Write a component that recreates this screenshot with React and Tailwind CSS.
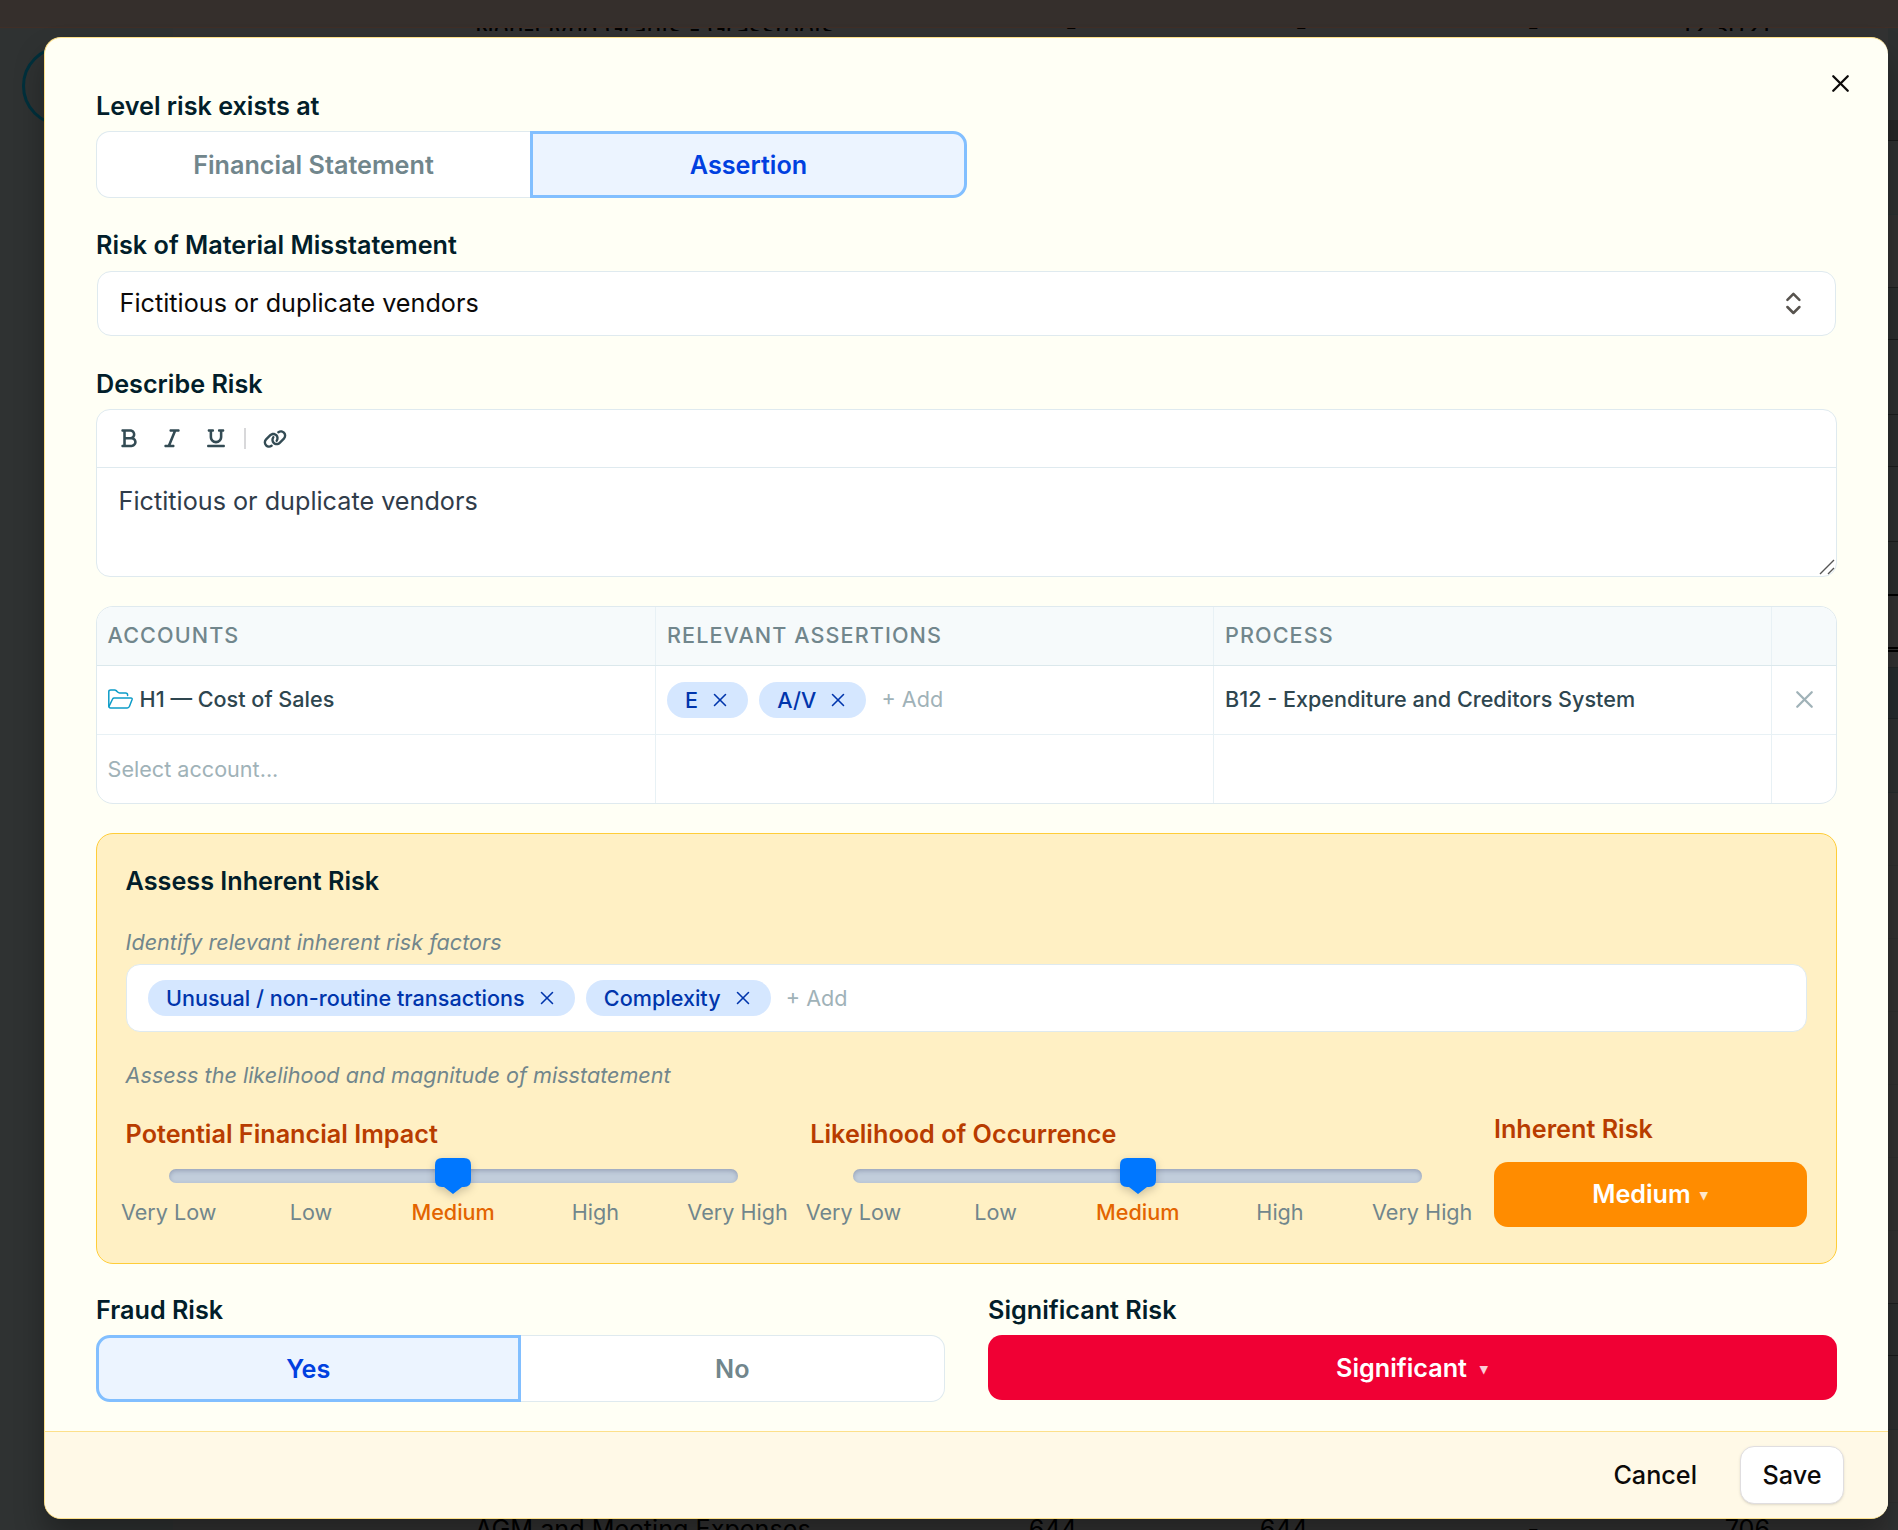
import React from "react";
import { X, ChevronsUpDown } from "lucide-react";
import { FaBold, FaItalic, FaUnderline, FaLink } from "react-icons/fa6";

const levels = ["Very Low", "Low", "Medium", "High", "Very High"];

// rows of the trial balance behind the dialog, only their right edge is visible
const edgeRows = [
  { h: 92, cls: "bg-[#2d3030]" },
  { h: 21, cls: "bg-[#272828] border-b border-[#181a1a]" },
  { h: 74, cls: "bg-[#2e3131] border-b border-[#293132]" },
  { h: 73, cls: "bg-[#323232] border-b border-[#1e2020]" },
  { h: 52, cls: "bg-[#2c2f2f] border-b border-[#1a1c1c]" },
  { h: 75, cls: "bg-[#2d3030] border-b border-[#1c1e1e]" },
  { h: 52, cls: "bg-[#2c2f2f] border-b border-[#1c1e1e]" },
  { h: 75, cls: "bg-[#2d3030] border-b border-[#1c1e1e]" },
  { h: 54, cls: "bg-[#2c2f2f] border-b-2 border-[#000]" },
  { h: 56, cls: "bg-[#323232] border-b-[5px] border-double border-[#000]" },
  { h: 16, cls: "bg-[#323232] border-b border-[#222728]" },
  { h: 51, cls: "bg-[#262c2e] border-b border-[#1e2425]" },
  { h: 74, cls: "bg-[#2d3030] border-b border-[#262c2d]" },
  { h: 73, cls: "bg-[#323232] border-b border-[#2e2f2f]" },
  { h: 73, cls: "bg-[#323232] border-b border-[#2e2f2f]" },
  { h: 73, cls: "bg-[#323232] border-b border-[#2e2f2f]" },
  { h: 73, cls: "bg-[#323232] border-b border-[#2e2f2f]" },
  { h: 73, cls: "bg-[#323232] border-b border-[#2e2f2f]" },
  { h: 73, cls: "bg-[#323232] border-b border-[#2e2f2f]" },
  { h: 73, cls: "bg-[#323232] border-b border-[#1e2020]" },
  { h: 52, cls: "bg-[#2c2f2f] border-b border-[#1a1c1c]" },
  { h: 74, cls: "bg-[#2c2f2f] border-b border-[#262c2d]" },
  { h: 73, cls: "bg-[#323232] border-b border-[#2e2f2f]" },
];

const FolderIcon = () => (
  <svg width="25" height="20" viewBox="0 0 25 20" fill="none" stroke="#0c9cc8" strokeWidth="1.5" strokeLinejoin="round" strokeLinecap="round">
    <path d="M.8 17V2.8Q.8.9 2.7.9H6.6Q7.5.9 8.2 1.6L9.6 3Q10.5 3.9 11.6 3.9H17.6Q19.6 3.9 19.6 5.9V6.6" />
    <path d="M1 17.4L4.6 10Q5.1 9 6.2 9H22.8Q24.6 9 24 10.7L21.4 17.4Q20.9 19 19.3 19H2.6Q.8 19 .8 17" />
  </svg>
);

const Label = ({ children, className = "" }) => (
  <div className={`text-[25.2px] leading-9 font-semibold text-[#021e2a] ${className}`}>{children}</div>
);

const Segmented = ({ options, active, className = "grid-cols-2" }) => (
  <div className={`mt-[7px] grid h-[67px] ${className}`}>
    {options.map((option, i) => (
      <button
        key={option}
        className={`pt-[2px] text-[25.2px] font-semibold ${i === 0 ? "rounded-l-[14px]" : "rounded-r-[14px]"} ${
          option === active
            ? "border-[3px] border-[#82bfff] bg-[#ecf4ff] text-[#0040e0]"
            : `border border-[#dfeaef] bg-white text-[#71868c] ${i === 0 ? "border-r-0" : "border-l-0"}`
        }`}
      >
        {option}
      </button>
    ))}
  </div>
);

const Chip = ({ children }) => (
  <span className="flex h-9 items-center gap-[11px] rounded-full bg-[#d5e7ff] pr-[17.2px] pl-[18px] text-[21.6px] font-medium text-[#0035ac]">
    {children}
    <X size={22} strokeWidth={1.7} />
  </span>
);

const RiskSlider = ({ title }) => (
  <div className="w-[649px]">
    <div className="text-[25.2px] leading-9 font-semibold text-[#b83c00]">{title}</div>
    <div className="relative mt-[17px] ml-[43px] h-[14px] w-[569px] rounded-full bg-[#c1cddb] shadow-[inset_0_2px_4px_rgba(60,70,110,0.3)]">
      <svg
        className="absolute -top-[11px] left-1/2 -ml-[18.1px] drop-shadow-[0_3px_4px_rgba(0,0,0,0.2)]"
        width="36"
        height="36"
        viewBox="0 0 36 36"
      >
        <path
          d="M7 0H29Q36 0 36 7V22Q36 29 29 29H27L18 36L9 29H7Q0 29 0 22V7Q0 0 7 0Z"
          fill="#0077ff"
        />
      </svg>
    </div>
    <div className="mt-[11px] -ml-[28px] flex w-[711px]">
      {levels.map((level) => (
        <span
          key={level}
          className={`flex-1 text-center text-[21.6px] leading-[36px] whitespace-nowrap ${
            level === "Medium" ? "font-medium text-[#e36400]" : "text-[#71868c]"
          }`}
        >
          {level}
        </span>
      ))}
    </div>
  </div>
);

const Backdrop = () => (
  <div className="flex h-full flex-col bg-[#303232]">
    <div className="h-[27px] shrink-0 bg-[#352f2c]" />
    <div className="h-[1px] shrink-0 bg-[#402e26]" />
    <div className="flex min-h-0 flex-1">
      <div className="w-[173px] bg-[#2f3232]">
        <div className="mt-[18px] ml-[22px] flex h-20 w-20 items-center justify-center rounded-full border-[3px] border-[#00303c]">
          <div className="h-11 w-11 rounded-full border border-[#24393e]" />
        </div>
      </div>
      <div className="relative flex-1 overflow-hidden bg-[#323232] text-[25.2px] leading-9 text-black">
        {/* row scrolled under the header */}
        <div className="relative h-[3px] overflow-hidden">
          <div className="absolute -top-[17px] left-[302px] tracking-[-0.2px] whitespace-nowrap">Non-Ovhd Grants - Grassroots</div>
          <div className="absolute -top-[19px] right-[811px]">-</div>
          <div className="absolute -top-[19px] right-[581px]">-</div>
          <div className="absolute -top-[19px] right-[349px]">-</div>
          <div className="absolute -top-[17px] right-[118px]">12,3021</div>
        </div>
        <div className="absolute bottom-[-17px] left-[302px]">AGM and Meeting Expenses</div>
        <div className="absolute right-[811px] bottom-[-17px]">644</div>
        <div className="absolute right-[580px] bottom-[-17px]">644</div>
        <div className="absolute right-[349px] bottom-[-17px]">-</div>
        <div className="absolute right-[118px] bottom-[-17px]">706</div>
      </div>
      <div className="w-[10px]">
        {edgeRows.map((row, i) => (
          <div key={i} className={row.cls} style={{ height: row.h }} />
        ))}
      </div>
    </div>
  </div>
);

export default function App() {
  return (
    <div className="relative h-[1530px] w-[1898px] overflow-hidden font-['Inter',sans-serif]">
      <Backdrop />

      {/* Dialog */}
      <div className="absolute top-[37px] left-[44px] flex h-[1482px] w-[1844px] flex-col overflow-hidden rounded-[17px] border border-r-0 border-[#fde08a] bg-[#fffff5] shadow-[0_18px_30px_rgba(0,0,0,0.3)]">
        <button className="absolute top-[31px] right-[33px] text-[#0c0a09]">
          <X size={29} strokeWidth={1.9} />
        </button>

        <div className="flex-1 pt-[50px] pr-[51px] pl-[51px]">
          <Label>Level risk exists at</Label>
          <Segmented options={["Financial Statement", "Assertion"]} active="Assertion" className="w-[871px] grid-cols-[434px_437px]" />

          <Label className="mt-[29px]">Risk of Material Misstatement</Label>
          <div className="mx-[1px] mt-[8px] flex h-[65px] items-center justify-between rounded-[14px] border border-[#dfeaef] bg-white pr-[27px] pl-[21.6px] text-[25.2px] text-[#0c0a09]">
            Fictitious or duplicate vendors
            <ChevronsUpDown size={28.8} strokeWidth={2.1} className="text-[#57534e]" />
          </div>

          <Label className="mt-[30px]">Describe Risk</Label>
          <div className="relative mt-[7px] h-[168px] rounded-[14px] border border-[#dfeaef] bg-white">
            <div className="flex h-[58px] items-center border-b border-[#dfeaef] pl-[21px] text-[20.5px] text-[#334b54]">
              <FaBold className="w-[22px]" />
              <FaItalic className="ml-[21px] w-[22px]" />
              <FaUnderline className="ml-[22px] w-[22px]" />
              <div className="ml-[17px] h-[21px] w-[2px] bg-[#d8d8da]" />
              <FaLink className="ml-[17px] h-[24px] w-[24px]" />
            </div>
            <div className="px-[21.6px] pt-[13px] text-[25.2px] leading-10 text-[#303c4a]">Fictitious or duplicate vendors</div>
            <svg className="absolute right-0 bottom-[1px]" width="17" height="17" viewBox="0 0 17 17" stroke="#555" strokeWidth="1.4">
              <path d="M1 16L15 2M9 16L15 10" />
            </svg>
          </div>

          {/* Accounts table */}
          <div className="mt-[29px] h-[198px] overflow-hidden rounded-[17px] border border-[#dfeaef] bg-white text-[21.6px]">
            <div className="grid h-[59px] grid-cols-[559px_558px_558px_64px] border-b border-[#dbe8ec] bg-[#f6fafb] font-medium tracking-[1.08px] text-[#71868c]">
              <div className="flex items-center border-r border-[#e8f1f5] px-[10.6px] pb-[2px]">ACCOUNTS</div>
              <div className="flex items-center border-r border-[#e8f1f5] px-[11px] pb-[2px]">RELEVANT ASSERTIONS</div>
              <div className="flex items-center border-r border-[#e8f1f5] px-[11px] pb-[2px]">PROCESS</div>
              <div />
            </div>
            <div className="grid h-[69px] grid-cols-[559px_558px_558px_64px] border-b border-[#e8f1f5] font-medium text-[#2e464f]">
              <div className="flex items-center gap-[7px] border-r border-[#e8f1f5] px-[10.6px] pb-[2px]">
                <FolderIcon />
                H1 — Cost of Sales
              </div>
              <div className="flex items-center gap-[11px] border-r border-[#e8f1f5] px-[11px]">
                <Chip>E</Chip>
                <Chip>A/V</Chip>
                <span className="ml-[4px] pb-[2px] font-normal text-[#a0b2b8]">+ Add</span>
              </div>
              <div className="flex items-center border-r border-[#e8f1f5] px-[11px] pb-[2px]">B12 - Expenditure and Creditors System</div>
              <div className="flex items-center justify-center pb-[2px] text-[#a0b2b8]">
                <X size={29} strokeWidth={1.9} />
              </div>
            </div>
            <div className="grid h-[68px] grid-cols-[559px_558px_558px_64px] text-[#a0b2b8]">
              <div className="flex items-center border-r border-[#e8f1f5] px-[10.6px]">Select account...</div>
              <div className="border-r border-[#e8f1f5]" />
              <div className="border-r border-[#e8f1f5]" />
              <div />
            </div>
          </div>

          {/* Inherent risk */}
          <div className="mt-[29px] h-[431px] rounded-[17px] border border-[#ffcd38] bg-[#fff0c4] pr-[29px] pl-[28.6px] pt-[29px]">
            <Label>Assess Inherent Risk</Label>
            <div className="mt-[29px] text-[21.6px] leading-[29px] text-[#71868c] italic">Identify relevant inherent risk factors</div>
            <div className="mt-[7px] flex h-[68px] items-center gap-[11px] rounded-[14px] border border-[#dfeaef] bg-white px-[21.4px]">
              <Chip>Unusual / non-routine transactions</Chip>
              <Chip>Complexity</Chip>
              <span className="ml-[4px] text-[21.6px] text-[#a0b2b8]">+ Add</span>
            </div>
            <div className="mt-[29px] text-[21.6px] leading-[29px] text-[#71868c] italic">
              Assess the likelihood and magnitude of misstatement
            </div>
            <div className="mt-[26px] flex">
              <RiskSlider title="Potential Financial Impact" />
              <div className="ml-[35.7px]">
                <RiskSlider title="Likelihood of Occurrence" />
              </div>
              <div className="-mt-[5px] ml-[34.7px] w-[313px]">
                <div className="text-[25.2px] leading-9 font-semibold text-[#b83c00]">Inherent Risk</div>
                <button className="mt-[15px] flex h-[65px] w-full items-center justify-center gap-[9px] rounded-[14px] bg-[#ff8c00] pr-[1px] text-[25.2px] font-semibold text-white">
                  Medium <span className="pt-[2px] text-[15px] text-white/80">▾</span>
                </button>
              </div>
            </div>
          </div>

          <div className="mt-[28px] grid grid-cols-2 gap-[43px]">
            <div>
              <Label>Fraud Risk</Label>
              <Segmented options={["Yes", "No"]} active="Yes" />
            </div>
            <div>
              <Label>Significant Risk</Label>
              <button className="mt-[7px] flex h-[65px] w-full items-center justify-center gap-[13px] rounded-[14px] bg-[#f00034] pt-[2px] pr-[1px] text-[25.2px] font-semibold text-white">
                Significant <span className="pt-[2px] text-[15px] text-white/80">▾</span>
              </button>
            </div>
          </div>
        </div>

        {/* Footer */}
        <div className="flex h-[87px] shrink-0 items-center justify-end gap-[43px] border-t border-[#fde08a] bg-[#fff9e7] pr-[44px] text-[25.2px] font-medium text-[#0c0a09]">
          <button className="pt-[1px]">Cancel</button>
          <button className="h-[58px] w-[104px] rounded-[14px] border border-[#e0dee0] bg-white pt-[1px] shadow-sm">Save</button>
        </div>
      </div>
    </div>
  );
}
